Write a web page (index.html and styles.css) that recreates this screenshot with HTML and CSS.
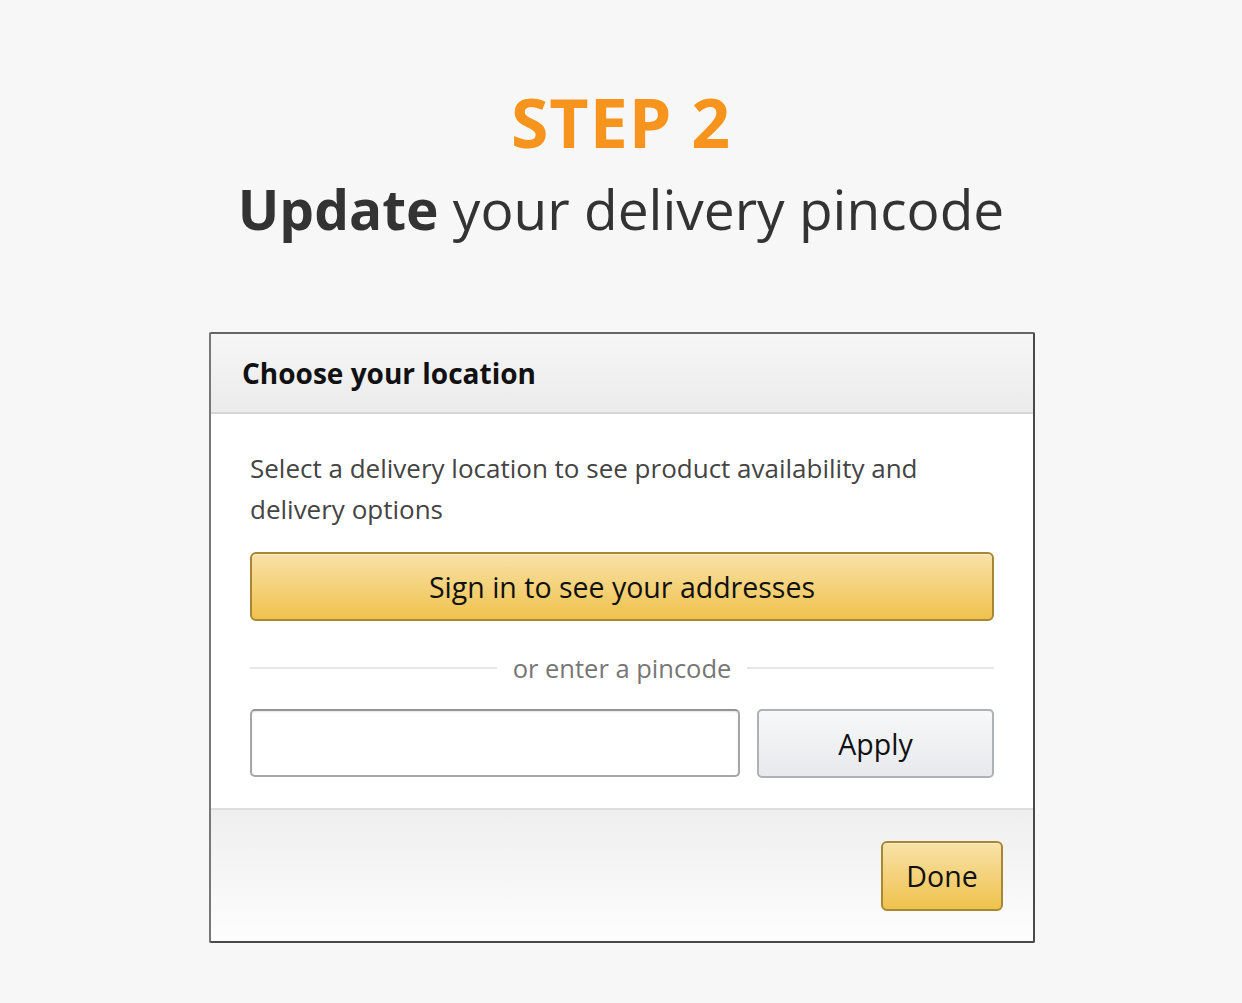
FILE: index.html
```html
<!DOCTYPE html>
<html lang="en">
<head>
  <meta charset="UTF-8" />
  <meta name="viewport" content="width=device-width, initial-scale=1.0"/>
  <title>Step 2</title>
  <link rel="stylesheet" href="styles.css">
</head>
<body>

  <div class="intro">
    <h1 class="step">STEP 2</h1>
    <h2 class="lead"><b>Update</b> your delivery pincode</h2>
  </div>

  <div class="popover">
    <div class="popover-header">Choose your location</div>

    <div class="popover-body">
      <p class="hint">Select a delivery location to see product availability and delivery options</p>

      <button class="btn-primary wide">Sign in to see your addresses</button>

      <div class="divider"><span>or enter a pincode</span></div>

      <div class="pin-row">
        <input type="text" class="pin-input" />
        <button class="btn-secondary">Apply</button>
      </div>
    </div>

    <div class="popover-footer">
      <button class="btn-primary done">Done</button>
    </div>
  </div>

</body>
</html>
```

FILE: styles.css
```css
body {
  margin: 0;
  background: #f7f7f7;
  font-family: "Open Sans", "Noto Sans", Arial, sans-serif;
  color: #111;
}
.intro {
  text-align: center;
  padding-top: 80px;
}
.step {
  margin: 0;
  font-size: 68px;
  line-height: 84px;
  font-weight: 700;
  color: #f7941d;
  letter-spacing: 1px;
}
.lead {
  margin: 5px 0 0;
  font-size: 55px;
  line-height: 80px;
  font-weight: 400;
  color: #333;
}
.lead b {
  font-weight: 700;
}
.popover {
  width: 822px;
  margin: 83px auto 0;
  position: relative;
  left: 1px;
  background: #fff;
  border: 2px solid #4a4a4a;
  border-top-color: #666;
  border-left-color: #777;
  border-radius: 2px;
}
.popover-header {
  height: 78px;
  padding: 0 31px;
  display: flex;
  align-items: center;
  font-size: 28px;
  font-weight: 700;
  background: linear-gradient(to bottom, #f6f6f6, #ebebeb);
  border-bottom: 2px solid #d6d6d6;
}
.popover-body {
  padding: 34px 39px 30px;
}
.hint {
  margin: 0 0 22px;
  font-size: 26px;
  line-height: 41px;
  color: #444;
}
button {
  font-family: inherit;
  cursor: pointer;
}
.btn-primary {
  background: linear-gradient(to bottom, #f8e2a8, #f0c24d);
  border: 2px solid #a88734;
  border-radius: 6px;
  color: #111;
  font-size: 28.5px;
  box-shadow: inset 0 1px 0 #fcefc8;
}
.wide {
  display: block;
  width: 100%;
  height: 69px;
}
.divider {
  display: flex;
  align-items: center;
  gap: 16px;
  margin: 30px 0 24px;
  font-size: 25.5px;
  color: #767676;
}
.divider::before,
.divider::after {
  content: "";
  flex: 1;
  height: 2px;
  background: #e7e7e7;
}
.pin-row {
  display: flex;
  gap: 17px;
}
.pin-input {
  flex: 1;
  height: 68px;
  box-sizing: border-box;
  border: 2px solid #a6a6a6;
  border-top-color: #949494;
  border-radius: 5px;
  box-shadow: inset 0 1px 2px rgba(0, 0, 0, 0.1);
}
.btn-secondary {
  width: 237px;
  height: 69px;
  background: linear-gradient(to bottom, #f7f8fa, #e7e9ec);
  border: 2px solid #adb1b8;
  border-radius: 5px;
  font-size: 28.5px;
  color: #111;
}
.popover-footer {
  height: 133px;
  box-sizing: border-box;
  padding: 31px 30px 0;
  display: flex;
  justify-content: flex-end;
  align-items: flex-start;
  border-top: 2px solid #dedede;
  background: linear-gradient(to bottom, #efefef, #fdfdfd);
}
.done {
  width: 122px;
  height: 70px;
}
```
